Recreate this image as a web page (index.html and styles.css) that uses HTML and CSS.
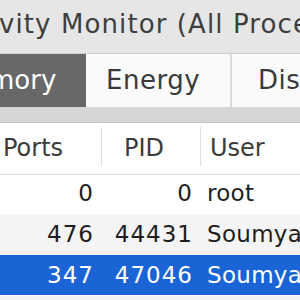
FILE: index.html
```html
<!DOCTYPE html>
<html>
<head>
<meta charset="utf-8">
<link rel="stylesheet" href="styles.css">
</head>
<body>
<div class="window">
  <div class="titlebar"><span class="title">vity Monitor (All Proce</span></div>
  <div class="tabs">
    <div class="tab active"><span class="memory">mory</span></div>
    <div class="tab energy">Energy</div>
    <div class="tab-sep"></div>
    <div class="tab disk">Disk</div>
  </div>
  <div class="band"></div>
  <div class="header">
    <div class="hcell c1">Ports</div>
    <div class="hsep"></div>
    <div class="hcell c2">PID</div>
    <div class="hsep"></div>
    <div class="hcell c3">User</div>
  </div>
  <div class="row r1">
    <div class="cell num">0</div>
    <div class="cell num">0</div>
    <div class="cell user">root</div>
  </div>
  <div class="row r2 alt">
    <div class="cell num">476</div>
    <div class="cell num">44431</div>
    <div class="cell user">Soumya</div>
  </div>
  <div class="row r3 selected">
    <div class="cell num">347</div>
    <div class="cell num">47046</div>
    <div class="cell user">Soumya</div>
  </div>
  <div class="row r4 alt"></div>
</div>
</body>
</html>
```

FILE: styles.css
```css
* {
  box-sizing: border-box;
  margin: 0;
  padding: 0;
}

html, body {
  width: 300px;
  height: 300px;
  overflow: hidden;
  background: #ffffff;
  font-family: "DejaVu Sans", sans-serif;
}

.window {
  width: 300px;
  height: 300px;
  overflow: hidden;
  display: flex;
  flex-direction: column;
}

.titlebar {
  height: 54px;
  flex: none;
  background: #e6e6e6;
  border-bottom: 1px solid #cfcfcf;
  white-space: nowrap;
  overflow: hidden;
  padding-top: 9px;
}

.title {
  font-size: 26px;
  line-height: 30px;
  letter-spacing: 1.1px;
  color: #3e3e3e;
  display: block;
  margin-left: -1px;
}

.tabs {
  height: 53px;
  flex: none;
  display: flex;
  white-space: nowrap;
  overflow: hidden;
}

.tab {
  font-size: 26px;
  line-height: 30px;
  padding-top: 11px;
  color: #3a3a3a;
  background: #fafafa;
  overflow: hidden;
}

.tab.active {
  width: 86px;
  background: #686868;
  color: #ffffff;
}

.memory {
  display: block;
  margin-left: -11px;
}

.tab.energy {
  width: 144px;
  padding-left: 20px;
  letter-spacing: 0.5px;
}

.tab-sep {
  width: 2px;
  background: #dcdcdc;
}

.tab.disk {
  flex: 1;
  padding-left: 26px;
  letter-spacing: 0.5px;
}

.band {
  height: 16px;
  flex: none;
  background: #d6d6d6;
  border-bottom: 1px solid #c5c5c5;
}

.header {
  height: 52px;
  flex: none;
  display: flex;
  border-bottom: 1px solid #dcdcdc;
  background: #ffffff;
}

.hcell {
  font-size: 24px;
  line-height: 28px;
  padding-top: 11px;
  color: #3b3b3b;
  white-space: nowrap;
}

.hcell.c1 {
  width: 101px;
  padding-left: 3px;
}

.hcell.c2 {
  width: 98px;
  padding-left: 22px;
}

.hcell.c3 {
  flex: 1;
  padding-left: 9px;
}

.hsep {
  width: 1px;
  margin: 4px 0 8px;
  background: #dedede;
}

.row {
  height: 40px;
  flex: none;
  display: grid;
  grid-template-columns: 102px 99px 1fr;
  font-size: 23px;
  line-height: 40px;
  color: #1e1e1e;
  background: #ffffff;
  white-space: nowrap;
  overflow: hidden;
}

.row.r1 {
  height: 39px;
  line-height: 36px;
}

.row.r2 {
  height: 41px;
  line-height: 41px;
}

.row.alt {
  background: #f4f4f4;
}

.row.selected {
  background: #1b64d6;
  color: #ffffff;
  border-bottom: 1px solid #ffffff;
  height: 41px;
}

.cell.num {
  text-align: right;
  padding-right: 8px;
  letter-spacing: 1px;
}

.cell.user {
  padding-left: 6px;
  letter-spacing: 0.3px;
}
```
